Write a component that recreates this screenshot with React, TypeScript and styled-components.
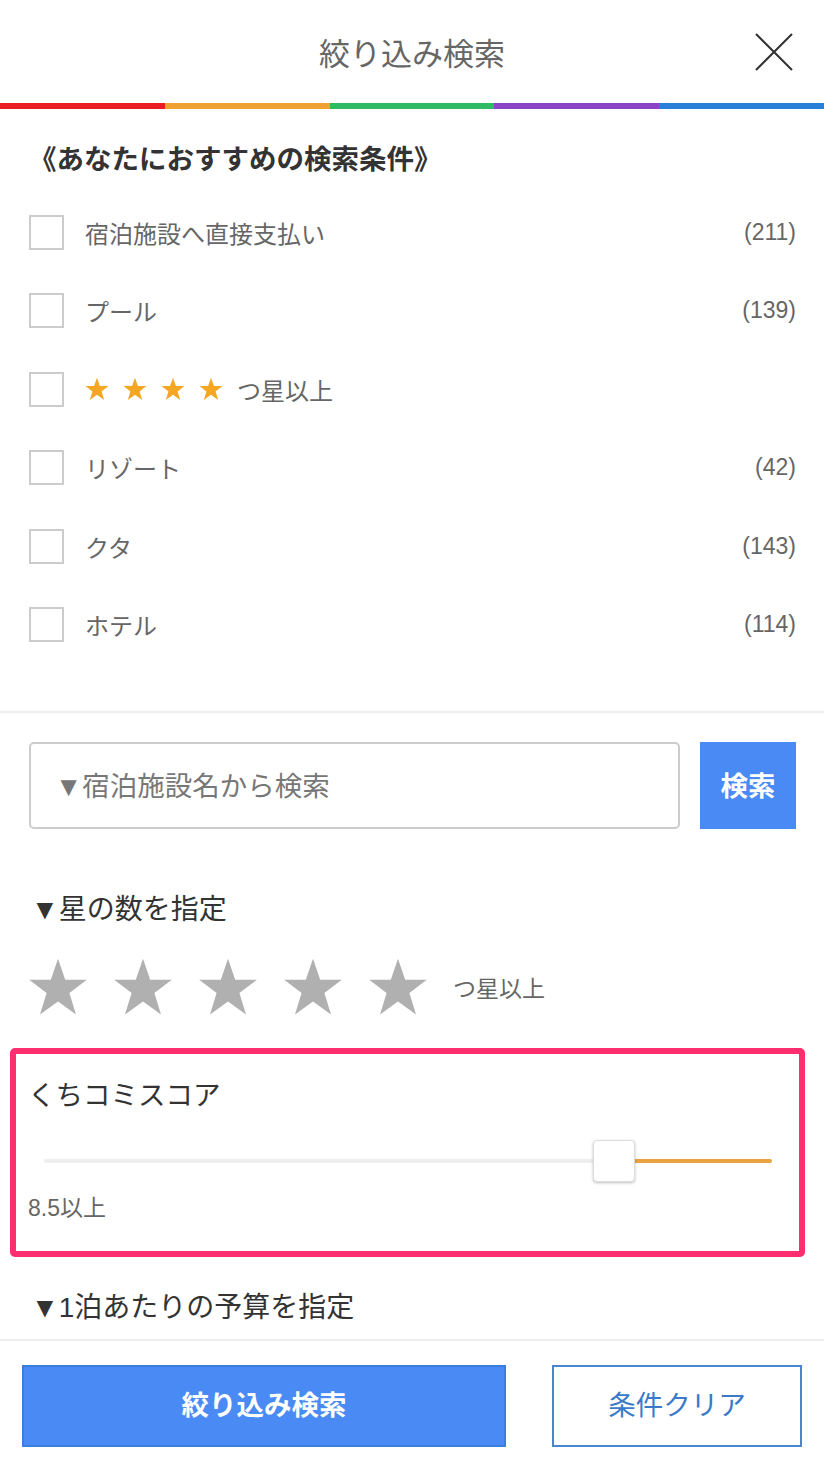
import React from "react";
import styled, { createGlobalStyle } from "styled-components";

const Global = createGlobalStyle`
  html, body { margin: 0; padding: 0; background: #fff; }
  body { font-family: "Liberation Sans", "Noto Sans CJK JP", sans-serif; color: #333; }
  * { box-sizing: border-box; }
`;

const Page = styled.div`
  width: 824px;
  height: 1468px;
  display: flex;
  flex-direction: column;
  overflow: hidden;
`;

const Header = styled.header`
  height: 103px;
  display: flex;
  align-items: center;
  justify-content: center;
  position: relative;
`;

const Title = styled.h1`
  margin: 0;
  font-size: 31px;
  font-weight: 400;
  color: #666;
`;

const Close = styled.button`
  position: absolute;
  right: 30px;
  top: 32px;
  width: 40px;
  height: 40px;
  padding: 0;
  border: 0;
  background: none;
`;

const Rainbow = styled.div`
  height: 6px;
  display: grid;
  grid-template-columns: repeat(5, 1fr);
`;

const Seg = styled.div<{ $c: string }>`
  background: ${(p) => p.$c};
`;

const Recommend = styled.section`
  padding: 34px 28px 47px 29px;
`;

const SectionTitle = styled.h2`
  margin: 0 0 16px 0;
  font-size: 27.5px;
  line-height: 34px;
  font-weight: 700;
  color: #333;
`;

const Row = styled.label`
  height: 78.5px;
  display: flex;
  align-items: center;
`;

const Box = styled.span`
  width: 35px;
  height: 35px;
  border: 2px solid #ccc;
  flex: none;
  margin-right: 21px;
`;

const Label = styled.span`
  flex: 1;
  font-size: 24px;
  color: #666;
  display: flex;
  align-items: center;
  gap: 14px;
`;

const Count = styled.span`
  font-size: 23px;
  color: #666;
`;

const Divider = styled.hr`
  margin: 0;
  border: 0;
  height: 2px;
  background: #eee;
`;

const SearchRow = styled.div`
  padding: 29px 28px 0 29px;
  display: flex;
  gap: 20px;
`;

const SearchInput = styled.div`
  flex: 1;
  height: 87px;
  border: 2px solid #ccc;
  border-radius: 5px;
  display: flex;
  align-items: center;
  padding: 0 0 3px 24px;
  font-size: 27.5px;
  color: #777;
`;

const SearchButton = styled.button`
  width: 96px;
  height: 87px;
  border: 0;
  padding: 0 0 4px 0;
  background: #4a8af4;
  color: #fff;
  font-family: inherit;
  font-size: 27.5px;
  font-weight: 700;
`;

const Heading = styled.h3<{ $mt: number }>`
  margin: ${(p) => p.$mt}px 0 0 0;
  padding-left: 31px;
  font-size: 28px;
  line-height: 34px;
  font-weight: 400;
  color: #333;
`;

const StarRow = styled.div`
  margin-top: 30px;
  padding-left: 28px;
  display: flex;
  align-items: center;
  gap: 25px;
  height: 60px;
`;

const StarSuffix = styled.span`
  font-size: 23px;
  color: #666;
`;

const ScoreBox = styled.section`
  margin: 31px 19px 0 10px;
  border: 6px solid #ff2e6e;
  border-radius: 5px;
  padding: 24px 0 29px 12px;
`;

const ScoreTitle = styled.div`
  font-size: 27.5px;
  line-height: 36px;
  color: #333;
`;

const Slider = styled.div`
  position: relative;
  margin: 26px 27px 0 16px;
  height: 42px;
  display: flex;
  align-items: center;
`;

const Track = styled.div`
  flex: 1;
  height: 4px;
  display: flex;
  border-radius: 2px;
  overflow: hidden;
`;

const TrackPart = styled.div<{ $c: string }>`
  background: ${(p) => p.$c};
`;

const Thumb = styled.div`
  position: absolute;
  top: 0;
  width: 42px;
  height: 42px;
  background: #fff;
  border: 1px solid #ddd;
  border-radius: 4px;
  box-shadow: 0 1px 3px rgba(0, 0, 0, 0.25);
`;

const ScoreValue = styled.div`
  margin-top: 12px;
  font-size: 23px;
  line-height: 28px;
  color: #666;
`;

const Footer = styled.footer`
  padding: 24px 22px 0 22px;
  display: flex;
  justify-content: space-between;
`;

const Primary = styled.button`
  width: 484px;
  height: 82px;
  padding: 0 0 6px 0;
  background: #4a8af4;
  border: 2px solid #3b7de0;
  color: #fff;
  font-family: inherit;
  font-size: 27.5px;
  font-weight: 700;
`;

const Secondary = styled.button`
  width: 250px;
  height: 82px;
  padding: 0 0 6px 0;
  background: #fff;
  border: 2px solid #4a86d0;
  color: #3a7ac8;
  font-family: inherit;
  font-size: 27.5px;
`;

const STAR = "M50 3 L62 38 L98 38 L69 60 L80 96 L50 74 L20 96 L31 60 L2 38 L38 38 Z";

const Star = ({ size, color }: { size: number; color: string }) => (
  <svg width={size} height={size} viewBox="0 0 100 100">
    <path d={STAR} fill={color} />
  </svg>
);

const items: { label: string; count?: string }[] = [
  { label: "宿泊施設へ直接支払い", count: "(211)" },
  { label: "プール", count: "(139)" },
  { label: "stars" },
  { label: "リゾート", count: "(42)" },
  { label: "クタ", count: "(143)" },
  { label: "ホテル", count: "(114)" },
];

const colors = ["#ea1c24", "#f0a134", "#2ebb63", "#8c44c6", "#2a80d8"];

export default function App() {
  const pct = 0.76;
  return (
    <Page>
      <Global />
      <Header>
        <Title>絞り込み検索</Title>
        <Close aria-label="close">
          <svg width="40" height="40" viewBox="0 0 40 40">
            <path d="M2 2 L38 38 M38 2 L2 38" stroke="#333" strokeWidth="2" />
          </svg>
        </Close>
      </Header>
      <Rainbow>
        {colors.map((c) => (
          <Seg key={c} $c={c} />
        ))}
      </Rainbow>
      <Recommend>
        <SectionTitle>《あなたにおすすめの検索条件》</SectionTitle>
        {items.map((it, i) => (
          <Row key={i}>
            <Box />
            <Label>
              {it.label === "stars" ? (
                <>
                  {[0, 1, 2, 3].map((s) => (
                    <Star key={s} size={24} color="#f5a623" />
                  ))}
                  <span>つ星以上</span>
                </>
              ) : (
                it.label
              )}
            </Label>
            {it.count && <Count>{it.count}</Count>}
          </Row>
        ))}
      </Recommend>
      <Divider />
      <SearchRow>
        <SearchInput>▼宿泊施設名から検索</SearchInput>
        <SearchButton>検索</SearchButton>
      </SearchRow>
      <Heading $mt={64}>▼星の数を指定</Heading>
      <StarRow>
        {[0, 1, 2, 3, 4].map((s) => (
          <Star key={s} size={60} color="#b0b0b0" />
        ))}
        <StarSuffix>つ星以上</StarSuffix>
      </StarRow>
      <ScoreBox>
        <ScoreTitle>くちコミスコア</ScoreTitle>
        <Slider>
          <Track>
            <TrackPart $c="#eee" style={{ width: `${pct * 100}%` }} />
            <TrackPart $c="#eaa33f" style={{ flex: 1 }} />
          </Track>
          <Thumb style={{ left: `calc(${pct * 100}% - 4px)` }} />
        </Slider>
        <ScoreValue>8.5以上</ScoreValue>
      </ScoreBox>
      <Heading $mt={34}>▼1泊あたりの予算を指定</Heading>
      <Divider style={{ marginTop: 14 }} />
      <Footer>
        <Primary>絞り込み検索</Primary>
        <Secondary>条件クリア</Secondary>
      </Footer>
    </Page>
  );
}
